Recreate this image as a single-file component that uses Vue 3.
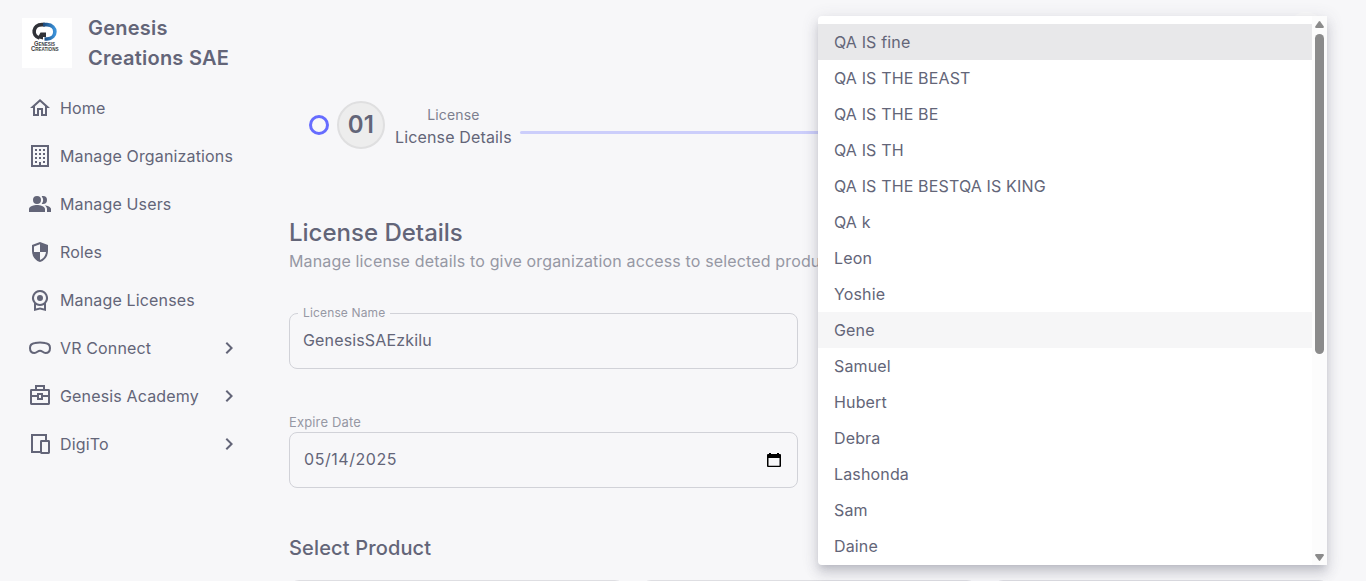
<script setup>
const nav = [
  { label: 'Home', icon: 'home' },
  { label: 'Manage Organizations', icon: 'building' },
  { label: 'Manage Users', icon: 'users' },
  { label: 'Roles', icon: 'shield' },
  { label: 'Manage Licenses', icon: 'award' },
  { label: 'VR Connect', icon: 'vr', more: true },
  { label: 'Genesis Academy', icon: 'case', more: true },
  { label: 'DigiTo', icon: 'devices', more: true },
]
const paths = {
  home: 'M12 5.69L17 10.19V18H15V12H9V18H7V10.19L12 5.69M12 3L2 12H5V20H11V14H13V20H19V12H22L12 3Z',
  building: 'M3 1H21V23H3ZM5 3V21H11V18H13V21H19V3ZM7 5H9V7H7ZM11 5H13V7H11ZM15 5H17V7H15ZM7 9H9V11H7ZM11 9H13V11H11ZM15 9H17V11H15ZM7 13H9V15H7ZM11 13H13V15H11ZM15 13H17V15H15ZM7 17H9V19H7ZM15 17H17V19H15Z',
  users: 'M16.67 13.13C18.04 14.06 19 15.32 19 17V20H23V17C23 14.82 19.43 13.53 16.67 13.13ZM15 12A4 4 0 0 0 15 4C14.53 4 14.09 4.1 13.67 4.24A6 6 0 0 1 13.67 11.76C14.09 11.9 14.53 12 15 12ZM9 4A4 4 0 1 0 9 12A4 4 0 1 0 9 4ZM9 13C6.33 13 1 14.34 1 17V20H17V17C17 14.34 11.67 13 9 13Z',
  shield: 'M12 2L4 5V11.09C4 16.14 7.41 20.85 12 22C16.59 20.85 20 16.14 20 11.09V5ZM12 4.15V12H18C17.6 15.6 15.2 18.9 12 19.93V12H6V6.4Z',
  award: 'M12 2A8 8 0 0 0 6 15.3V23L12 21.6L18 23V15.3A8 8 0 0 0 12 2ZM12 4A6 6 0 1 1 12 16A6 6 0 1 1 12 4ZM12 7A3 3 0 1 0 12 13A3 3 0 1 0 12 7ZM8 16.9A8 8 0 0 0 16 16.9V20.4L12 19.4L8 20.4Z',
}
const options = ['QA IS fine', 'QA IS THE BEAST', 'QA IS THE BE', 'QA IS TH', 'QA IS THE BESTQA IS KING', 'QA k', 'Leon', 'Yoshie', 'Gene', 'Samuel', 'Hubert', 'Debra', 'Lashonda', 'Sam', 'Daine']
</script>

<template>
  <div class="page">
    <aside>
      <div class="brand">
        <svg class="logo" viewBox="0 0 50 50">
          <defs><linearGradient id="blue"><stop offset="0" stop-color="#1b487b" /><stop offset="1" stop-color="#3b91d8" /></linearGradient></defs>
          <rect width="50" height="50" fill="#fff" />
          <path d="M23 6.6H20C10.5 6.6 9.5 18 17.5 20" fill="none" stroke="#303238" stroke-width="3.6" />
          <path d="M18.5 14.5H24V19H21V21.5L15.5 20Z" fill="#303238" />
          <path d="M21 6.6H25C35.5 7 35.5 20.5 25 21H22.5" fill="none" stroke="url(#blue)" stroke-width="3.6" />
          <text x="12" y="28" textLength="21" lengthAdjust="spacingAndGlyphs">G<tspan>ENESIS</tspan></text>
          <text x="9" y="33" textLength="27.5" lengthAdjust="spacingAndGlyphs">C<tspan>REATIONS</tspan></text>
        </svg>
        <div class="name">Genesis Creations SAE</div>
      </div>
      <nav>
        <div v-for="n in nav" :key="n.label" class="item">
          <svg class="icon" viewBox="0 0 24 24">
            <path v-if="paths[n.icon]" :d="paths[n.icon]" fill="currentColor" fill-rule="evenodd" />
            <g v-else fill="none" stroke="currentColor" stroke-width="2">
              <path v-if="n.icon === 'vr'" d="M7 7Q12 6.2 17 7C20.5 7.4 22 9.3 22 12C22 15 20.5 17 17.5 17C15 17 14.3 14.7 12 14.7S9 17 6.5 17C3.5 17 2 15 2 12C2 9.3 3.5 7.4 7 7Z" />
              <template v-if="n.icon === 'case'"><rect x="3" y="6" width="18" height="14" rx=".4" /><path d="M8 6V2H16V6M3 12H10M14 12H21M10 10H14V15H10Z" /></template>
              <template v-if="n.icon === 'devices'"><path d="M12 20H4V3H18V9" /><rect x="13" y="9" width="8" height="12" rx=".4" /></template>
            </g>
          </svg>
          <span>{{ n.label }}</span>
          <svg v-if="n.more" class="chev" viewBox="0 0 24 24"><path d="M8.59 16.58L13.17 12L8.59 7.41L10 6L16 12L10 18L8.59 16.58Z" fill="currentColor" /></svg>
        </div>
      </nav>
    </aside>
    <main>
      <div class="stepper">
        <i class="dot"></i>
        <b class="num">01</b>
        <div class="step"><span>License</span><p>License Details</p></div>
        <i class="line"></i>
      </div>
      <h1>License Details</h1>
      <p class="sub">Manage license details to give organization access to selected products</p>
      <fieldset class="field named"><legend>License Name</legend><span>GenesisSAEzkilu</span></fieldset>
      <label>Expire Date</label>
      <div class="field date">
        <span>05/14/2025</span>
        <svg viewBox="0 0 14 15"><path d="M2 0H4V1H10V0H12V1H13Q14 1 14 2V13Q14 14 13 14H1Q0 14 0 13V2Q0 1 1 1H2ZM1.5 5V12.7H12.5V5Z" fill-rule="evenodd" /></svg>
      </div>
      <h2>Select Product</h2>
      <div class="cards"><i></i><i></i><i></i></div>
    </main>
    <i class="fab"></i>
    <div class="menu">
      <ul><li v-for="(o, i) in options" :key="i" :class="{ selected: i === 0, hover: i === 8 }">{{ o }}</li></ul>
      <div class="scroll">
        <svg viewBox="0 0 9 7"><path d="M3.8.5Q4.5-.3 5.2.5L8.8 5.5Q9 7 8 7H1Q0 7 .2 5.5Z" /></svg>
        <i></i>
        <svg class="down" viewBox="0 0 9 7"><path d="M3.8.5Q4.5-.3 5.2.5L8.8 5.5Q9 7 8 7H1Q0 7 .2 5.5Z" /></svg>
      </div>
    </div>
  </div>
</template>

<style>
body { overflow: hidden; background: #f7f7f9; }
</style>
<style scoped>
* { box-sizing: border-box; }
.page { position: relative; display: flex; width: 1366px; height: 581px; overflow: hidden; background: #f7f7f9; color: #636578; font: 400 16px/24px Inter, sans-serif; letter-spacing: .15px; }
p, h1, h2, ul { margin: 0; padding: 0; }
aside { width: 260px; flex: none; padding-top: 13px; }
.brand { display: flex; padding-left: 22px; gap: 16px; height: 71px; }
.logo { width: 50px; height: 50px; margin-top: 5px; }
.logo text { font: 700 6.4px "Liberation Sans", sans-serif; letter-spacing: 0; fill: #3a3c42; }
.logo tspan { font-size: 5px; }
.name { width: 150px; font-weight: 600; font-size: 20px; line-height: 30px; letter-spacing: .24px; }
.item { display: flex; align-items: center; height: 48px; padding-left: 28px; gap: 8px; padding-right: 19px; }
.icon { width: 24px; height: 24px; flex: none; }
.chev { width: 24px; height: 24px; margin-left: auto; }
main { padding: 101px 0 0 29px; width: 1050px; flex: none; }
.stepper { display: flex; align-items: center; height: 48px; }
.dot { width: 20px; height: 20px; border: 3px solid #666cff; border-radius: 50%; margin: 0 8px 0 20px; }
.num { width: 48px; height: 48px; border: 2px solid #dfdfe0; border-radius: 50%; background: #ededed; font-size: 24px; font-weight: 600; line-height: 44px; text-align: center; }
.step { margin: 0 8px 0 10px; text-align: center; padding-top: 1px; line-height: 22px; }
.step span { font-size: 14px; color: #7d7f8f; display: block; }
.line { flex: 1; height: 3px; border-radius: 3px; background: #cccefb; margin-top: 15px; }
h1 { margin-top: 68px; font-size: 24px; line-height: 32px; font-weight: 500; letter-spacing: 0; }
.sub { line-height: 26px; margin-top: -1px; color: #9698a4; white-space: nowrap; }
.field { width: 509px; height: 56px; border: 1px solid #d1d2d8; border-radius: 8px; }
.named { height: 62px; margin: 33px 0 0; padding: 0 13px; }
legend { margin-left: -5px; padding: 0 5px; font-size: 12px; line-height: 12px; color: #9698a4; }
.named span { display: block; margin-top: 9px; }
label { display: block; margin-top: 44px; font-size: 13px; line-height: 19px; color: #9698a4; }
.date { display: flex; align-items: center; padding: 0 16px 0 14px; justify-content: space-between; }
.date span { letter-spacing: .55px; margin-top: -2px; }
.date svg { width: 14px; height: 15px; }
h2 { margin-top: 44px; font-size: 20px; line-height: 32px; font-weight: 500; }
.cards { display: flex; gap: 16px; margin-top: 16px; }
.cards i { width: 336px; height: 90px; border: 1px solid #dedee2; border-radius: 10px; flex: none; }
.fab { position: absolute; left: 1287px; top: 12px; width: 38px; height: 38px; border-radius: 50%; background: #fafafa; }
.menu { position: absolute; left: 818px; top: 16px; width: 509px; height: 549px; display: flex; overflow: hidden; background: #fff; border-radius: 4px 0 0 4px; box-shadow: 0 5px 6px -3px rgba(76,78,100,.2), 0 3px 16px 2px rgba(76,78,100,.12), 0 9px 12px 1px rgba(76,78,100,.14); }
ul { flex: 1; padding-top: 8px; list-style: none; }
li { height: 36px; line-height: 36px; padding-left: 16px; }
.selected { background: #e8e8ea; }
.hover { background: #f6f6f7; }
.scroll { width: 15px; background: #fcfcfc; display: flex; flex-direction: column; align-items: center; padding: 5px 0 4px; }
.scroll svg { width: 9px; height: 7px; fill: #8b8b8b; flex: none; }
.scroll i { width: 9px; height: 320px; margin-top: 6px; border-radius: 5px; background: #8b8b8b; }
.scroll .down { margin-top: auto; transform: rotate(180deg); }
</style>
